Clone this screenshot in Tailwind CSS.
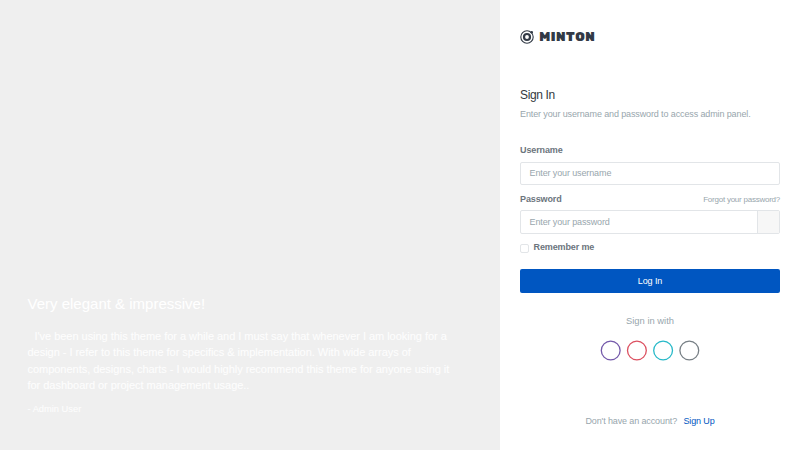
<!DOCTYPE html>
<html lang="en">
<head>
<meta charset="utf-8">
<title>Minton - Sign In</title>
<script src="https://cdn.jsdelivr.net/npm/@tailwindcss/browser@4"></script>
</head>
<body class="flex h-[450px] w-[800px] overflow-hidden bg-[#efefef] font-['Liberation_Sans',Arial,sans-serif] text-[9px] tracking-[-0.12px] text-[#98a6ad]">
<section class="flex w-[500px] flex-col justify-end pb-[34px] pl-[27.5px] text-white">
  <h2 class="mb-[15px] text-[15px] leading-[18px] tracking-normal">Very elegant &amp; impressive!</h2>
  <p class="text-[11px] leading-[16.25px] tracking-[-0.03px] whitespace-nowrap text-white/90"><span class="inline-block w-[7px]"></span>I've been using this theme for a while and I must say that whenever I am looking for a<br>design - I refer to this theme for specifics &amp; implementation. With wide arrays of<br>components, designs, charts - I would highly recommend this theme for anyone using it<br>for dashboard or project management usage..</p>
  <p class="mt-[9px] text-[9.3px] leading-[14px] tracking-normal text-white/90">- Admin User</p>
</section>
<main class="flex w-[300px] flex-col bg-white px-5 pt-[29px]">
  <a class="block h-4" aria-label="Minton">
    <svg class="block" width="80" height="16" viewBox="0 0 80 16">
      <circle cx="7" cy="8" r="6.2" fill="none" stroke="#323a46" stroke-width="1.1"/>
      <circle cx="7" cy="8" r="3" fill="none" stroke="#323a46" stroke-width="2.2"/>
      <circle cx="11.7" cy="3.3" r="1.3" fill="#323a46"/>
      <text transform="translate(19.3 12.3) scale(1 1.12)" textLength="56" lengthAdjust="spacingAndGlyphs" font-family="Rubik, Roboto, sans-serif" font-size="12.2" font-weight="900" letter-spacing=".5" fill="#323a46">MINTON</text>
    </svg>
  </a>
  <h1 class="mt-[43px] text-[12px] leading-[14px] tracking-[-0.35px] text-[#343a40]">Sign In</h1>
  <p class="mt-[6px] leading-[13px]">Enter your username and password to access admin panel.</p>
  <form class="mt-[23px]">
    <label class="block h-[18px] leading-[13px] font-bold text-[#6c757d]">Username</label>
    <div class="flex h-[23px] items-center rounded-[2px] border border-[#e2e5e8] px-[8.5px]">Enter your username</div>
    <div class="mt-[7.5px] flex h-[17.5px] justify-between leading-[13px]"><label class="font-bold text-[#6c757d]">Password</label><a class="text-[8px] leading-[14px] tracking-[-0.24px]">Forgot your password?</a></div>
    <div class="flex h-[24px] overflow-hidden rounded-[2px] border border-[#e2e5e8]"><div class="flex flex-1 items-center px-[8.5px] pt-px">Enter your password</div><div class="w-[22.5px] border-l border-[#e2e5e8] bg-[#f7f7f7]"></div></div>
    <div class="mt-[7px] flex h-[14px] items-center text-[#6c757d]"><span class="mt-px mr-[4.5px] h-[9px] w-[9px] rounded-[2px] border border-[#e2e5e8]"></span><label class="font-bold">Remember me</label></div>
    <button type="button" class="mt-[14px] block h-[24px] w-full rounded-[2px] bg-[#0056c1] pt-px text-white">Log In</button>
  </form>
  <p class="mt-[20.5px] text-center text-[9.4px] leading-[14px] tracking-normal">Sign in with</p>
  <svg class="mx-auto mt-[12px] block" width="100" height="21" viewBox="0 0 100 21" fill="none" stroke-width="1.3">
    <circle cx="10.7" cy="10.5" r="9.4" stroke="#7459aa"/>
    <circle cx="36.9" cy="10.5" r="9.4" stroke="#dc5060"/>
    <circle cx="63.1" cy="10.5" r="9.4" stroke="#27b9c8"/>
    <circle cx="89.3" cy="10.5" r="9.4" stroke="#777f85"/>
  </svg>
  <p class="mt-[53px] text-center leading-[14px]">Don't have an account? <a class="ml-[4px] text-[#0056c1]">Sign Up</a></p>
</main>
</body>
</html>
